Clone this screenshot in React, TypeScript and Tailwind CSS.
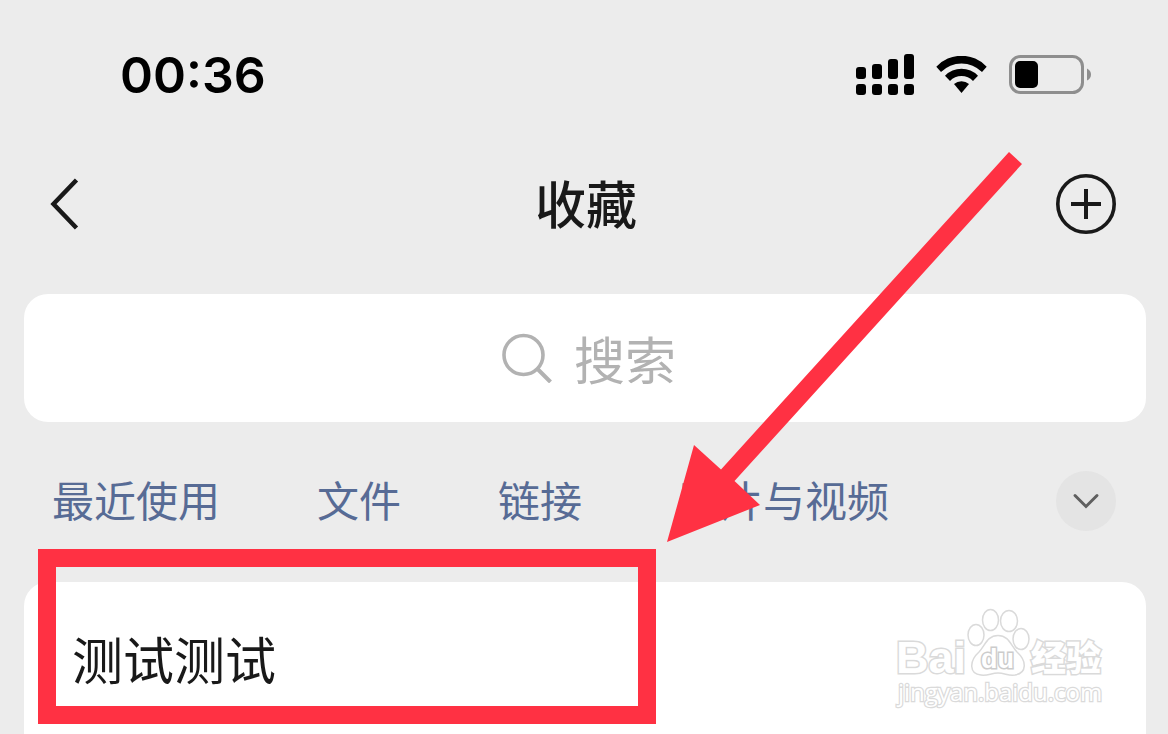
import React, { useState } from 'react';

const tabs = ['最近使用', '文件', '链接', '图片与视频'];

const notes = ['测试测试'];

const App = () => {
  const [query, setQuery] = useState('');

  return (
    <div className="relative flex min-h-screen flex-col overflow-hidden bg-[#ececec] pl-6 pr-[22px] font-['Noto_Sans_CJK_SC',sans-serif] text-[#191919]">
      <StatusBar />

      <header className="grid h-[108px] grid-cols-[1fr_auto_1fr] items-center pl-[26px] pr-6">
        <button type="button" aria-label="返回" className="justify-self-start">
          <svg width="30" height="52" viewBox="0 0 30 52" fill="none">
            <path d="M26.500 2 L3.500 26 L26.500 50" stroke="#191919" strokeWidth="4.500" />
          </svg>
        </button>
        <h1 className="pb-1 text-[51px] font-medium leading-[60px]">收藏</h1>
        <button type="button" aria-label="添加" className="justify-self-end pr-1.5">
          <svg width="60" height="60" viewBox="0 0 60 60" fill="none" stroke="#191919">
            <circle cx="30" cy="30" r="28.200" strokeWidth="3.600" />
            <path d="M30 15v30M15 30h30" strokeWidth="4" />
          </svg>
        </button>
      </header>

      <label className="mt-9 flex h-32 shrink-0 items-center justify-center gap-[22px] rounded-3xl bg-white pl-2">
        <SearchIcon />
        <input
          type="text"
          aria-label="搜索"
          placeholder="搜索"
          value={query}
          onChange={(e) => setQuery(e.target.value)}
          className="h-[72px] w-[102px] bg-transparent text-[51px] leading-[72px] outline-none placeholder:text-[#b2b2b2]"
        />
      </label>

      <div className="flex h-40 shrink-0 items-center justify-between pb-0.5 pl-7 pr-[30px]">
        <nav className="flex gap-[97px] pb-1">
          {tabs.map((tab) => (
            <button
              key={tab}
              type="button"
              className="whitespace-nowrap text-[42px] leading-[60px] text-[#576b95]"
            >
              {tab}
            </button>
          ))}
        </nav>
        <button
          type="button"
          aria-label="展开"
          className="flex size-[60px] items-center justify-center rounded-full bg-[#e4e4e4]"
        >
          <svg width="28" height="18" viewBox="0 0 28 18" fill="none">
            <path
              d="M3 3.500 L14 14.500 L25 3.500"
              stroke="#5f5f5f"
              strokeWidth="3"
              strokeLinecap="round"
            />
          </svg>
        </button>
      </div>

      <main className="flex grow items-start justify-between rounded-t-3xl bg-white">
        <ul className="px-12 pt-10">
          {notes.map((note) => (
            <li key={note} className="text-[51px] leading-[72px]">
              {note}
            </li>
          ))}
        </ul>
        <Watermark />
      </main>

      {/* marked-up area and the arrow pointing at it */}
      <div className="pointer-events-none absolute left-[38px] top-[549px] h-[175px] w-[618px] border-[18px] border-[#ff3143]" />
      <svg
        className="pointer-events-none absolute left-[667px] top-[152px]"
        width="355"
        height="390"
        viewBox="0 0 355 390"
        fill="#ff3143"
      >
        <path d="M342 0 L355 12 L67.500 329 L93 353 L0 390 L27 293 L54 317.500 Z" />
      </svg>
    </div>
  );
};

const StatusBar = () => (
  <div className="flex h-[150px] shrink-0 items-center justify-between pl-24 pr-[55px] text-black">
    <span className="font-['Inter',sans-serif] text-[50px] font-semibold leading-[60px]">
      00:36
    </span>
    <div className="flex items-center gap-[22px]">
      <svg width="58" height="42" viewBox="0 0 58 42">
        <rect x="0" y="13" width="10" height="12" rx="3" />
        <rect x="16" y="10" width="10" height="15" rx="3" />
        <rect x="32" y="5" width="10" height="20" rx="3" />
        <rect x="48" y="0" width="10" height="25" rx="3" />
        <rect x="0" y="30" width="10" height="11" rx="3" />
        <rect x="16" y="30" width="10" height="11" rx="3" />
        <rect x="32" y="30" width="10" height="11" rx="3" />
        <rect x="48" y="30" width="10" height="11" rx="3" />
      </svg>
      <svg width="51" height="38" viewBox="0 0 51 38">
        <path d="M0.300 10.700 A34.500 34.500 0 0 1 50.700 10.700 L46 16 A29 29 0 0 0 5 16 Z" />
        <path d="M9 19.700 A23 23 0 0 1 42 19.700 L37 25 A15.500 15.500 0 0 0 14 25 Z" />
        <path d="M18 28 A12 12 0 0 1 33 28 L25.500 37 Z" />
      </svg>
      <svg width="82" height="40" viewBox="0 0 82 40">
        <rect x="1.500" y="1.500" width="72" height="36" rx="10" fill="none" stroke="#8e8e8e" strokeWidth="3" />
        <rect x="6" y="6" width="23" height="27" rx="5" />
        <path d="M78 13.500 Q82 15.500 82 19.500 Q82 23.500 78 25.500 Z" fill="#8e8e8e" />
      </svg>
    </div>
  </div>
);

const SearchIcon = () => (
  <svg width="50" height="50" viewBox="0 0 50 50" fill="none" stroke="#b2b2b2">
    <circle cx="21.500" cy="22" r="19.500" strokeWidth="3.600" />
    <path d="M35 35.500 L48.500 49" strokeWidth="4" />
  </svg>
);

const Watermark = () => (
  <svg
    className="mr-9 mt-[23px] shrink-0"
    width="220"
    height="110"
    viewBox="0 0 220 110"
    fill="#fff"
    stroke="#dadada"
    strokeWidth="1.500"
  >
    <ellipse cx="86" cy="30" rx="8" ry="10.500" />
    <ellipse cx="100.500" cy="15" rx="8" ry="10.500" />
    <ellipse cx="119" cy="16" rx="8.500" ry="10.500" />
    <ellipse cx="131" cy="34" rx="8" ry="10.500" />
    <path d="M108 30.500 C97 30.500 95 41 89 47 C79 56 79 69 91 70 C98 71 101 68 108 68 C115 68 118 71 125 70 C137 68 137 56 127 47 C121 41 119 30.500 108 30.500 Z" />
    <g className="font-['Liberation_Sans',sans-serif] font-bold" paintOrder="stroke" strokeWidth="3">
      <text x="6" y="68" fontSize="45">Bai</text>
      <text x="91" y="63" fontSize="27" stroke="#cccccc">du</text>
    </g>
    <text
      x="141"
      y="66"
      fontSize="35"
      paintOrder="stroke"
      strokeWidth="3"
      className="font-['Noto_Sans_CJK_SC',sans-serif] font-black"
    >
      经验
    </text>
    <text
      x="8"
      y="96"
      fontSize="24"
      paintOrder="stroke"
      strokeWidth="2.500"
      className="font-['Open_Sans',sans-serif]"
    >
      jingyan.baidu.com
    </text>
  </svg>
);

export default App;
